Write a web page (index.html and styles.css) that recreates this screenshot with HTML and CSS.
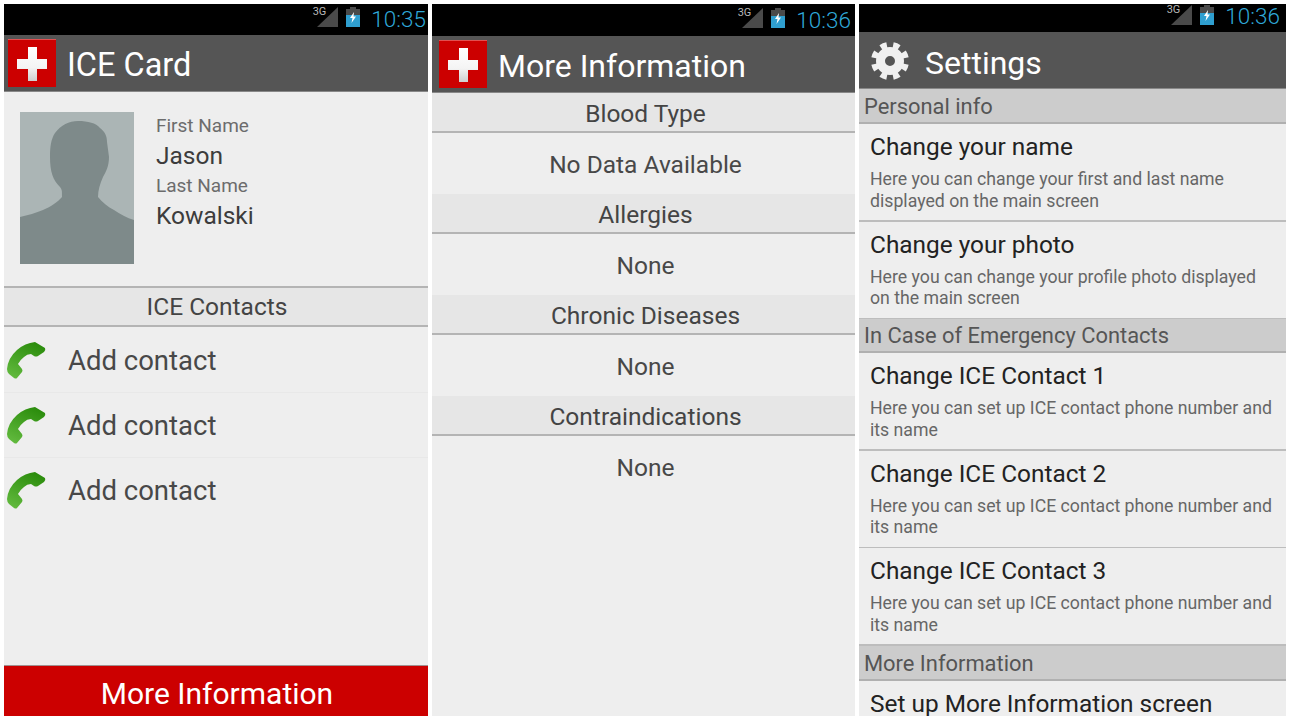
FILE: index.html
```html
<!DOCTYPE html>
<html>
    <head>
        <meta charset="UTF-8">
        <title>ICE Card</title>
        <link rel="stylesheet" href="styles.css">
    </head>
    <body>
        <svg class="defs" width="0" height="0">
            <defs>
                <linearGradient id="phoneGrad" x1="0.7" y1="0" x2="0.2" y2="1">
                    <stop offset="0" stop-color="#2b8c0c"/>
                    <stop offset="1" stop-color="#62ba3e"/>
                </linearGradient>
                <linearGradient id="crossGrad" x1="0" y1="0" x2="0" y2="1">
                    <stop offset="0" stop-color="#ffffff"/>
                    <stop offset="0.6" stop-color="#f4f4f4"/>
                    <stop offset="1" stop-color="#cfcfcf"/>
                </linearGradient>
                <linearGradient id="battGrad" x1="0" y1="0" x2="0" y2="1">
                    <stop offset="0" stop-color="#4a4a4a"/>
                    <stop offset="0.4" stop-color="#4a4a4a"/>
                    <stop offset="0.4" stop-color="#2f9fd0"/>
                    <stop offset="1" stop-color="#2f9fd0"/>
                </linearGradient>
                <symbol id="redCross" viewBox="0 0 48 48">
                    <rect width="48" height="48" fill="#cc0000"/>
                    <rect width="48" height="1" fill="#e25050"/>
                    <path d="M20 8h9v12h10v10H29v12h-9V30H9V20h11z" fill="url(#crossGrad)"/>
                </symbol>
                <symbol id="phone" viewBox="0 0 39 37">
                    <path d="M28 0L38 6Q39 8 37 10L31 14Q29 15 27 14L24 12Q20 12 17 15Q13 18 11 22L15 27Q16 29 15 30L10 36Q9 37 7 36L2 32Q0 30 0 27Q1 16 10 8Q18 1 28 0Z" fill="url(#phoneGrad)"/>
                </symbol>
                <symbol id="signal" viewBox="0 0 21 20">
                    <path d="M21 0V20H0Z" fill="#4a4a4a"/>
                </symbol>
                <symbol id="battery" viewBox="0 0 14 20">
                    <path d="M4 0H10V2H14V20H0V2H4Z" fill="url(#battGrad)"/>
                    <path d="M8 5L4 11H6.500L5.500 16L10 9.500H7.500Z" fill="#ffffff"/>
                </symbol>
            </defs>
        </svg>

        <div class="screens">
            <!-- main card -->
            <div class="screen screenCard">
                <div class="statusBar">
                    <span class="netLabel">3G</span>
                    <svg class="signal"><use href="#signal"/></svg>
                    <svg class="battery"><use href="#battery"/></svg>
                    <span class="clock">10:35</span>
                </div>
                <div class="actionBar">
                    <svg class="appIcon"><use href="#redCross"/></svg>
                    <span class="appTitle">ICE Card</span>
                </div>
                <div class="profile">
                    <svg class="photo" viewBox="0 0 114 152">
                        <rect width="114" height="152" fill="#abb5b5"/>
                        <path d="M58 9C68 9 76 11 80 16C85 20 87 24 87 30L89 45C89 54 86 60 83 65C80 72 78 78 78 85C82 90 88 95 94 98C100 102 107 106 114 108V152H0V105C8 103 16 101 23 98C30 95 38 90 42 85C42 78 42 78 40 75C33 68 30 60 30 45C30 35 31 27 35 21C41 13 49 9 58 9Z" fill="#7e8a8a"/>
                    </svg>
                    <div class="names">
                        <div class="nameLabel">First Name</div>
                        <div class="nameValue">Jason</div>
                        <div class="nameLabel">Last Name</div>
                        <div class="nameValue">Kowalski</div>
                    </div>
                </div>
                <div class="listHeader contactsHeader">ICE Contacts</div>
                <div class="contactRow">
                    <svg class="phoneIcon"><use href="#phone"/></svg>
                    <span>Add contact</span>
                </div>
                <div class="contactRow">
                    <svg class="phoneIcon"><use href="#phone"/></svg>
                    <span>Add contact</span>
                </div>
                <div class="contactRow">
                    <svg class="phoneIcon"><use href="#phone"/></svg>
                    <span>Add contact</span>
                </div>
                <button class="moreBtn">More Information</button>
            </div>

            <!-- more information -->
            <div class="screen screenInfo">
                <div class="statusBar">
                    <span class="netLabel">3G</span>
                    <svg class="signal"><use href="#signal"/></svg>
                    <svg class="battery"><use href="#battery"/></svg>
                    <span class="clock">10:36</span>
                </div>
                <div class="actionBar">
                    <svg class="appIcon"><use href="#redCross"/></svg>
                    <span class="appTitle">More Information</span>
                </div>
                <div class="listHeader">Blood Type</div>
                <div class="infoValue">No Data Available</div>
                <div class="listHeader">Allergies</div>
                <div class="infoValue">None</div>
                <div class="listHeader">Chronic Diseases</div>
                <div class="infoValue">None</div>
                <div class="listHeader">Contraindications</div>
                <div class="infoValue">None</div>
            </div>

            <!-- settings -->
            <div class="screen screenSettings">
                <div class="statusBar">
                    <span class="netLabel">3G</span>
                    <svg class="signal"><use href="#signal"/></svg>
                    <svg class="battery"><use href="#battery"/></svg>
                    <span class="clock">10:36</span>
                </div>
                <div class="actionBar">
                    <svg class="gear" viewBox="0 0 38 38">
                        <circle cx="19" cy="19" r="9.500" fill="none" stroke="#f0f0f0" stroke-width="9"/>
                        <circle cx="19" cy="19" r="16" fill="none" stroke="#f0f0f0" stroke-width="6" pathLength="16" stroke-dasharray="1 1" transform="rotate(11.25 19 19)"/>
                    </svg>
                    <span class="appTitle">Settings</span>
                </div>
                <div class="prefGroup">Personal info</div>
                <div class="prefItem">
                    <div class="prefTitle">Change your name</div>
                    <div class="prefText">Here you can change your first and last name displayed on the main screen</div>
                </div>
                <div class="prefItem">
                    <div class="prefTitle">Change your photo</div>
                    <div class="prefText">Here you can change your profile photo displayed on the main screen</div>
                </div>
                <div class="prefGroup prefGroupShort">In Case of Emergency Contacts</div>
                <div class="prefItem">
                    <div class="prefTitle">Change ICE Contact 1</div>
                    <div class="prefText">Here you can set up ICE contact phone number and its name</div>
                </div>
                <div class="prefItem">
                    <div class="prefTitle">Change ICE Contact 2</div>
                    <div class="prefText">Here you can set up ICE contact phone number and its name</div>
                </div>
                <div class="prefItem">
                    <div class="prefTitle">Change ICE Contact 3</div>
                    <div class="prefText">Here you can set up ICE contact phone number and its name</div>
                </div>
                <div class="prefGroup">More Information</div>
                <div class="prefItem">
                    <div class="prefTitle">Set up More Information screen</div>
                </div>
            </div>
        </div>
    </body>
</html>
```

FILE: styles.css
```css
* {
    box-sizing: border-box;
}

html, body {
    height: 100%;
}

body {
    margin: 0;
    background: #ffffff;
    font-family: Roboto, "Liberation Sans", sans-serif;
    color: #444444;
    overflow: hidden;
}

.defs {
    display: block;
    height: 0;
}

.screens {
    display: flex;
    gap: 4px;
    height: 720px;
    padding: 4px;
}

.screen {
    display: flex;
    flex-direction: column;
    height: 712px;
    overflow: hidden;
    background: #eeeeee;
}

.screenCard {
    width: 424px;
}

.screenInfo {
    width: 423px;
}

.screenSettings {
    width: 427px;
}

/* status bar */
.statusBar {
    display: flex;
    flex: none;
    align-items: flex-start;
    justify-content: flex-end;
    height: 31px;
    background: #000000;
    padding-top: 3px;
    padding-right: 2px;
}

.screenInfo .statusBar {
    height: 32px;
    padding-top: 4px;
    padding-right: 4px;
}

.screenSettings .statusBar {
    height: 28px;
    padding-top: 1px;
    padding-right: 6px;
}

.netLabel {
    font-size: 11px;
    line-height: 10px;
    color: #b8b8b8;
    margin-right: -9px;
    position: relative;
    z-index: 1;
}

.signal {
    width: 21px;
    height: 20px;
    margin-right: 8px;
}

.battery {
    width: 14px;
    height: 20px;
    margin-right: 11px;
}

.clock {
    margin-top: 1px;
    font-size: 22.5px;
    line-height: 22px;
    font-weight: 300;
    color: #2fa8d8;
}

.screenSettings .clock {
    margin-top: 0;
}

/* action bar */
.actionBar {
    display: flex;
    flex: none;
    align-items: center;
    height: 57px;
    background: #555555;
    border-bottom: 1px solid #888888;
    padding-left: 4px;
}

.screenInfo .actionBar {
    padding-left: 7px;
}

.screenSettings .actionBar {
    padding-left: 12px;
}

.appIcon {
    width: 48px;
    height: 48px;
    flex: none;
}

.gear {
    width: 38px;
    height: 38px;
    flex: none;
    margin-top: 1px;
}

.appTitle {
    margin-left: 11px;
    padding-top: 4px;
    font-size: 32px;
    color: #ffffff;
}

.screenCard .appTitle {
    font-size: 32.5px;
}

.screenSettings .appTitle {
    margin-left: 16px;
    padding-top: 6px;
}

/* card */
.profile {
    display: flex;
    flex: none;
    height: 194px;
    padding: 20px 0 0 16px;
}

.photo {
    width: 114px;
    height: 152px;
    flex: none;
}

.names {
    margin-left: 22px;
}

.nameLabel {
    font-size: 19px;
    line-height: 28px;
    color: #6c6c6c;
}

.nameValue {
    font-size: 24.5px;
    line-height: 32px;
    color: #3c3c3c;
}

.listHeader {
    flex: none;
    height: 40px;
    background: #e6e6e6;
    border-bottom: 2px solid #b4b4b4;
    text-align: center;
    font-size: 24.5px;
    line-height: 42px;
}

.screenInfo .listHeader, .screenInfo .infoValue {
    padding-left: 4px;
}

.contactsHeader {
    height: 41px;
    padding-left: 2px;
    border-top: 2px solid #b4b4b4;
    line-height: 38px;
}

.contactRow {
    display: flex;
    flex: none;
    align-items: center;
    height: 65px;
    padding-left: 3px;
    font-size: 27.5px;
    color: #484848;
}

.contactRow + .contactRow {
    border-top: 1px solid #e8e8e8;
    padding-bottom: 1px;
}

.contactRow span {
    margin-left: 22px;
    padding-top: 2px;
}

.phoneIcon {
    width: 39px;
    height: 37px;
    flex: none;
    margin-top: 2px;
}

.moreBtn {
    display: block;
    width: 100%;
    height: 51px;
    margin-top: auto;
    padding: 4px 0 0 2px;
    background: #cc0000;
    border: 0;
    border-top: 1px solid #a09090;
    font-family: inherit;
    font-size: 30px;
    color: #ffffff;
}

/* more information */
.infoValue {
    flex: none;
    height: 61px;
    text-align: center;
    font-size: 24.5px;
    line-height: 64px;
    color: #484848;
}

/* settings */
.prefGroup {
    flex: none;
    height: 35px;
    padding-left: 5px;
    background: #cccccc;
    border-bottom: 2px solid #b0b0b0;
    font-size: 21.9px;
    line-height: 35px;
    color: #555555;
}

.prefGroupShort {
    height: 34px;
    line-height: 33px;
}

.prefItem {
    flex: none;
    height: 97.5px;
    padding: 8px 11px 0 11px;
    border-bottom: 2px solid #bdbdbd;
}

.prefGroup + .prefItem + .prefItem, .prefGroup + .prefItem + .prefItem + .prefItem + .prefItem {
    border-bottom: 1px solid #bdbdbd;
}

.prefTitle {
    font-size: 24.4px;
    line-height: 29px;
    color: #222222;
}

.prefText {
    margin-top: 8px;
    font-size: 17.7px;
    line-height: 21.5px;
    color: #666666;
}
```
